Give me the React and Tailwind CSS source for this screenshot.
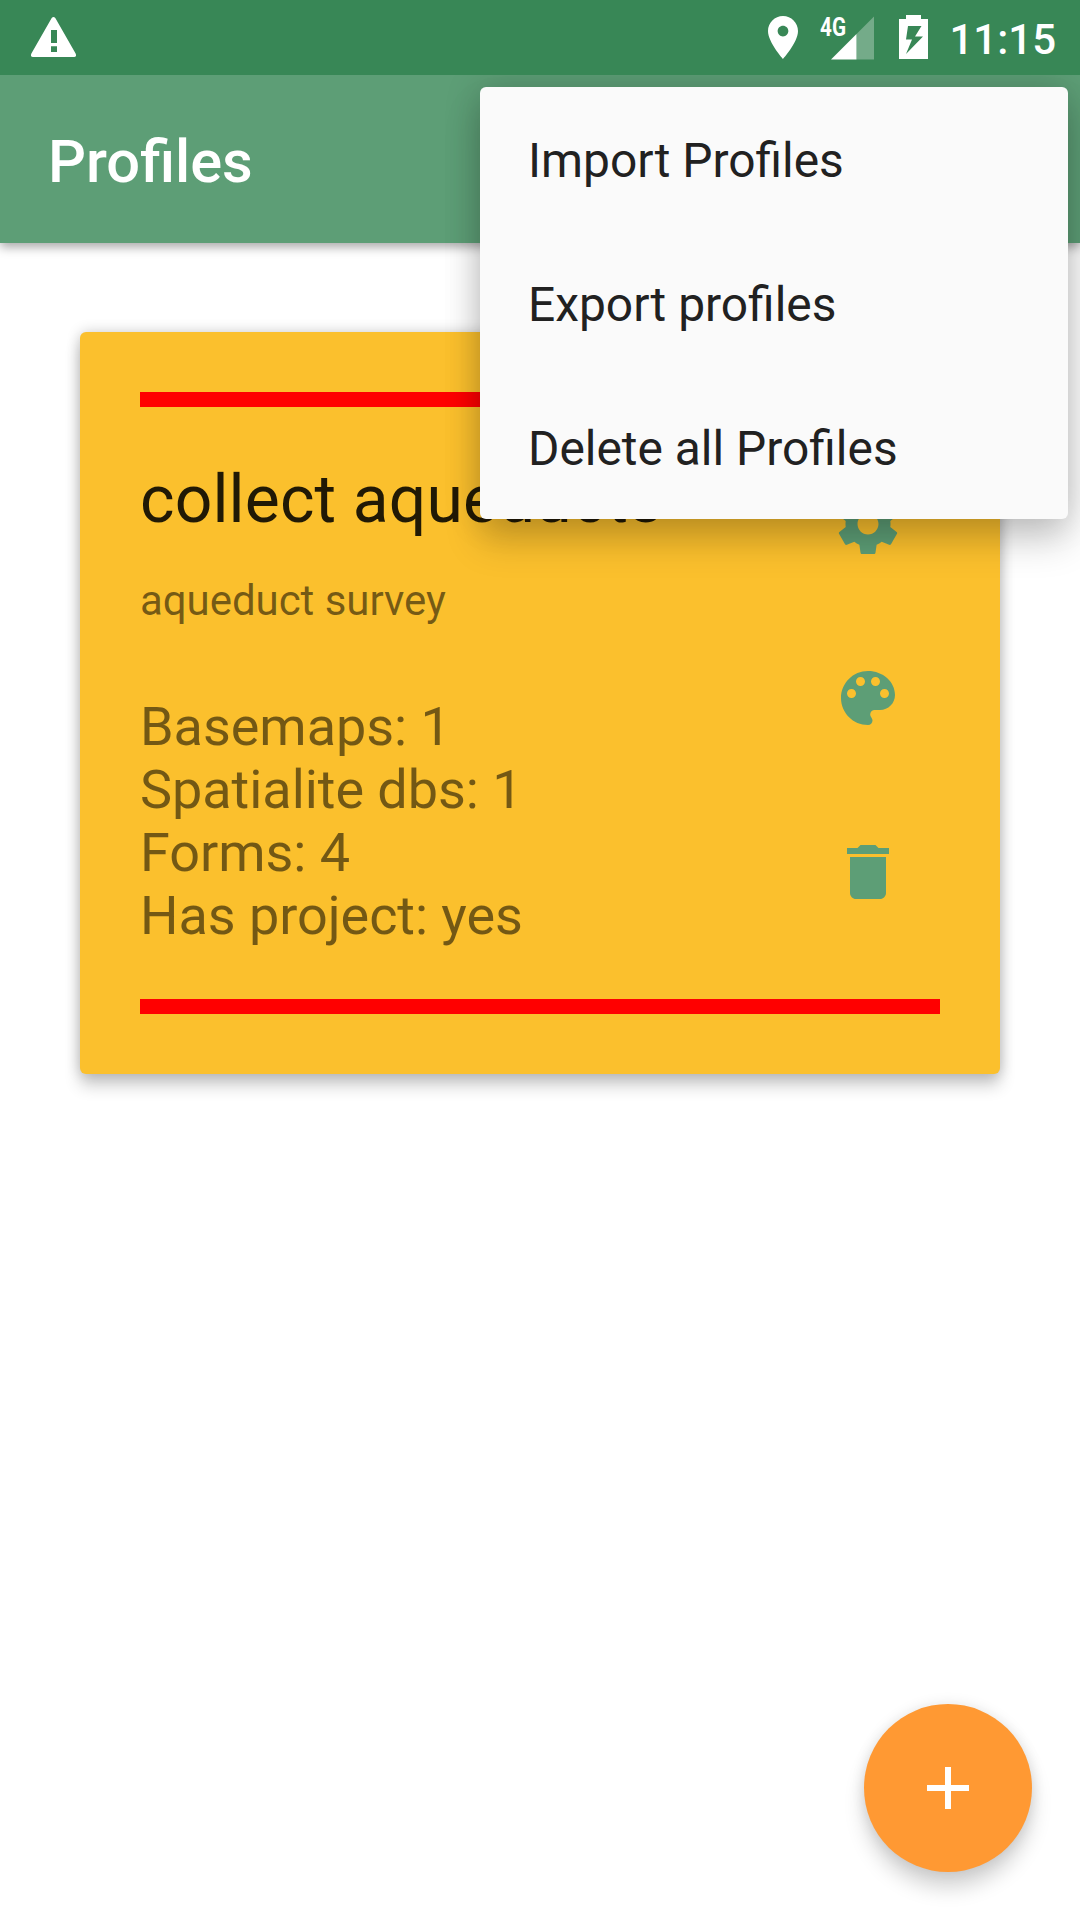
import React from "react";
import { MdDelete, MdAdd } from "react-icons/md";

const stats = ["Basemaps: 1", "Spatialite dbs: 1", "Forms: 4", "Has project: yes"];
const menuItems = ["Import Profiles", "Export profiles", "Delete all Profiles"];

function SettingsIcon({ className }) {
  return (
    <svg className={className} viewBox="0 0 24 24" fill="currentColor">
      <path d="M19.43 12.98c.04-.32.07-.64.07-.98s-.03-.66-.07-.98l2.11-1.65c.19-.15.24-.42.12-.64l-2-3.46c-.12-.22-.39-.3-.61-.22l-2.49 1c-.52-.4-1.08-.73-1.69-.98l-.38-2.65C14.46 2.18 14.25 2 14 2h-4c-.25 0-.46.18-.49.42l-.38 2.65c-.61.25-1.17.59-1.69.98l-2.49-1c-.23-.09-.49 0-.61.22l-2 3.46c-.13.22-.07.49.12.64l2.11 1.65c-.04.32-.07.65-.07.98s.03.66.07.98l-2.11 1.65c-.19.15-.24.42-.12.64l2 3.46c.12.22.39.3.61.22l2.49-1c.52.4 1.08.73 1.69.98l.38 2.65c.03.24.24.42.49.42h4c.25 0 .46-.18.49-.42l.38-2.65c.61-.25 1.17-.59 1.69-.98l2.49 1c.23.09.49 0 .61-.22l2-3.46c.12-.22.07-.49-.12-.64l-2.11-1.65zM12 15.5c-1.93 0-3.500-1.570-3.500-3.500s1.570-3.500 3.500-3.500 3.500 1.570 3.500 3.500-1.570 3.500-3.500 3.500z" />
    </svg>
  );
}

function PaletteIcon({ className }) {
  return (
    <svg className={className} viewBox="0 0 24 24" fill="currentColor">
      <path d="M12 3c-4.970 0-9 4.030-9 9s4.030 9 9 9c.83 0 1.500-.67 1.500-1.500 0-.39-.15-.74-.39-1.010-.23-.26-.38-.61-.38-.99 0-.83.67-1.500 1.500-1.500H16c2.760 0 5-2.240 5-5 0-4.420-4.030-8-9-8zm-5.500 9c-.83 0-1.500-.67-1.500-1.500S5.670 9 6.500 9 8 9.670 8 10.500 7.330 12 6.500 12zm3-4C8.670 8 8 7.330 8 6.500S8.670 5 9.500 5s1.500.67 1.500 1.500S10.330 8 9.500 8zm5 0c-.83 0-1.500-.67-1.500-1.500S13.670 5 14.500 5s1.500.67 1.500 1.500S15.330 8 14.500 8zm3 4c-.83 0-1.500-.67-1.500-1.500S16.670 9 17.500 9s1.500.67 1.500 1.500-.67 1.500-1.500 1.500z" />
    </svg>
  );
}

const actions = [
  { label: "Settings", Icon: SettingsIcon },
  { label: "Color", Icon: PaletteIcon },
  { label: "Delete", Icon: MdDelete },
];

function StatusBar() {
  return (
    <div className="relative z-10 flex h-[75px] items-center bg-[#388756] pl-[31px] pr-[24px] text-white">
      <svg className="-mt-px h-[40px] w-[45px]" viewBox="0 0 45 40" fill="currentColor">
        <path
          fillRule="evenodd"
          d="M20.7 1.1Q22.5 -1.1 24.3 1.1L44.6 36.5Q46 40 43 40H2Q-1 40 .4 36.5ZM20 13V26H26V13ZM20 29.3V35H26V29.3Z"
        />
      </svg>
      <div className="ml-auto flex items-center">
        <svg className="h-[43px] w-[30px]" viewBox="5 2 14 20" preserveAspectRatio="none" fill="currentColor">
          <path d="M12 2C8.13 2 5 5.13 5 9c0 5.25 7 13 7 13s7-7.75 7-13c0-3.87-3.13-7-7-7zm0 9.500c-1.380 0-2.500-1.120-2.500-2.500s1.120-2.500 2.500-2.500 2.500 1.120 2.500 2.500-1.120 2.500-2.500 2.500z" />
        </svg>
        <svg className="ml-[22px] h-[60px] w-[54px]" viewBox="0 -8 54 60" fill="currentColor">
          <text x="0" y="20" fontFamily="Roboto" fontWeight="700" fontSize="25" textLength="26" lengthAdjust="spacingAndGlyphs">
            4G
          </text>
          <path d="M11 43.500L36.500 18V43.500Z" />
          <path d="M36.500 18L54 .5V43.500H36.500Z" opacity="0.3" />
        </svg>
        <svg className="ml-[25px] mb-px h-[44px] w-[29px]" viewBox="0 0 29 44" fill="currentColor">
          <path fillRule="evenodd" d="M7 0H22V4H29V44H0V4H7ZM9 11L7 24.500H13L7 39L24 21.500H16L22.500 11Z" />
        </svg>
        <span className="ml-[21px] pt-[4px] text-[42px] leading-none font-medium">11:15</span>
      </div>
    </div>
  );
}

function ProfileCard() {
  return (
    <section className="mx-[80px] mt-[89px] rounded-[6px] bg-[#fbc02d] p-[60px] shadow-[0_12px_16px_rgba(0,0,0,0.19),0_0_14px_rgba(0,0,0,0.2)]">
      <div className="h-[15px] bg-[#ff0000]" />
      <div className="flex h-[592px] justify-between">
        <div className="pt-[54px]">
          <h2 className="text-[66px] leading-[77px] tracking-[0.12px] whitespace-nowrap text-black/87">collect aqueducts</h2>
          <p className="mt-[38px] text-[42px] leading-[49px] tracking-[-0.05px] text-black/54">aqueduct survey</p>
          <ul className="mt-[70px] text-[54px] leading-[63px] tracking-[-0.05px] text-black/54">
            {stats.map((s) => (
              <li key={s}>{s}</li>
            ))}
          </ul>
        </div>
        <div className="flex flex-col gap-[30px] pt-[45px] text-[#5d9e76]">
          {actions.map(({ label, Icon }) => (
            <button key={label} aria-label={label} className="flex size-[144px] items-center justify-center">
              <Icon className="size-[72px]" />
            </button>
          ))}
        </div>
      </div>
      <div className="h-[15px] bg-[#ff0000]" />
    </section>
  );
}

export default function App() {
  return (
    <div className="relative h-[1920px] w-[1080px] overflow-hidden bg-white font-['Roboto',sans-serif]">
      <StatusBar />
      <header className="flex h-[168px] items-center bg-[#5d9e76] px-[48px] pt-[5px] shadow-[0_4px_10px_rgba(0,0,0,0.35)]">
        <h1 className="text-[59.6px] leading-[60px] font-medium text-white">Profiles</h1>
      </header>
      <ProfileCard />

      <ul className="absolute top-[87px] right-[12px] w-[588px] rounded-[6px] bg-[#fafafa] text-[47.9px] leading-[72px] text-[#212121] shadow-[0_24px_36px_rgba(0,0,0,0.17),0_0_36px_rgba(0,0,0,0.18)]">
        {menuItems.map((item) => (
          <li key={item} className="flex h-[144px] items-center px-[48px] pt-[4px]">
            {item}
          </li>
        ))}
      </ul>

      <button
        aria-label="Add profile"
        className="absolute right-[48px] bottom-[48px] flex size-[168px] items-center justify-center rounded-full bg-[#ff9933] text-white shadow-[0_16px_20px_rgba(0,0,0,0.17),0_0_14px_rgba(0,0,0,0.1)]"
      >
        <MdAdd className="size-[72px]" />
      </button>
    </div>
  );
}
